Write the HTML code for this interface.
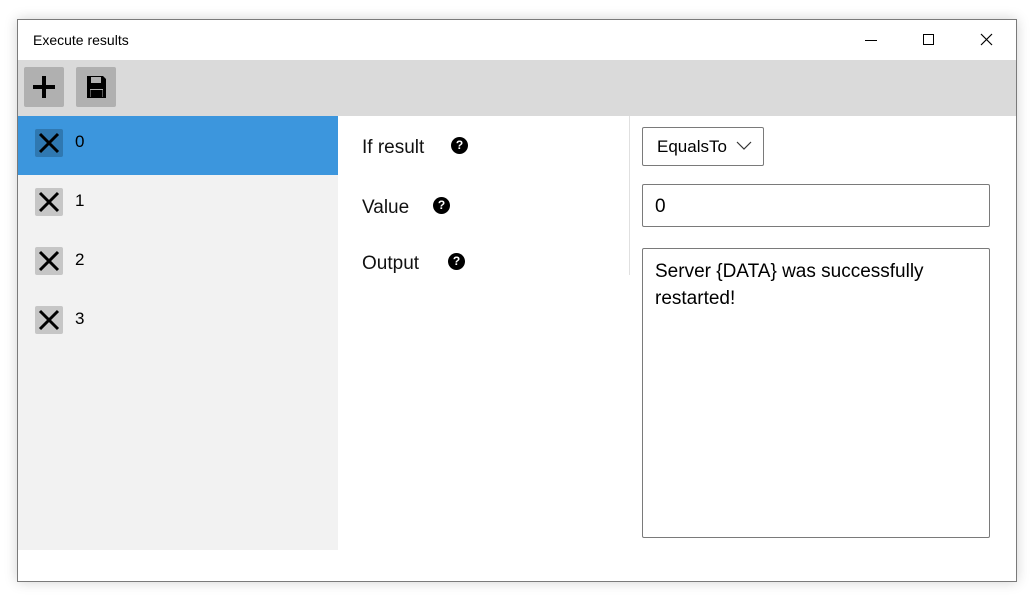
<!DOCTYPE html>
<html><head><style>
body{margin:0;width:1033px;height:616px;background:#fff;position:relative;overflow:hidden;font-family:"Segoe UI","Liberation Sans",sans-serif;color:#000}
.a{position:absolute}
.win{left:17px;top:19px;width:998px;height:561px;border:1px solid #7a7a7a;box-shadow:0 0 12px rgba(0,0,0,.18);background:#fff}
.xb{width:28px;height:28px;background:#c6c6c6;border-radius:2px}
.row{left:18px;width:320px;height:59px}
.row span{position:absolute;left:57px;top:16px;font-size:17px}
.lbl{font-size:19px;color:#111}
.q{width:17px;height:17px;border-radius:50%;background:#000;color:#fff;font-size:12px;font-weight:bold;text-align:center;line-height:17px}
.box{border:1px solid #7a7a7a;border-radius:2px;background:#fff;font-size:19px;box-sizing:border-box}
</style></head><body>
<div class="a win"></div>
<div class="a" style="left:33px;top:32px;font-size:14px">Execute results</div>
<svg class="a" style="left:860px;top:30px" width="140" height="20">
<line x1="5" y1="10.5" x2="17" y2="10.5" stroke="#000"/>
<rect x="63.5" y="4.5" width="10" height="10" fill="none" stroke="#000"/>
<path d="M121 4L132 15M132 4L121 15" stroke="#000" stroke-width="1.2"/>
</svg>
<div class="a" style="left:18px;top:60px;width:998px;height:56px;background:#dadada"></div>
<div class="a" style="left:24px;top:67px;width:40px;height:40px;background:#b0b0b0;border-radius:2px"></div>
<svg class="a" style="left:24px;top:67px" width="40" height="40"><path d="M20 9V31M9 20H31" stroke="#000" stroke-width="4"/></svg>
<div class="a" style="left:76px;top:67px;width:40px;height:40px;background:#b0b0b0;border-radius:2px"></div>
<svg class="a" style="left:76px;top:67px" width="40" height="40"><path d="M11 9H27L30 12V31H11Z" fill="#000"/><rect x="15" y="10" width="10" height="6" fill="#b0b0b0"/><rect x="14" y="22" width="13" height="8" fill="#b0b0b0"/><rect x="14.5" y="23" width="12" height="7" fill="#000"/></svg>
<div class="a" style="left:18px;top:116px;width:320px;height:434px;background:#f2f2f2"></div>
<div class="a row" style="top:116px;background:#3c96dd"><span>0</span></div>
<div class="a row" style="top:175px"><span>1</span></div>
<div class="a row" style="top:234px"><span>2</span></div>
<div class="a row" style="top:293px"><span>3</span></div>
<div class="a xb" style="left:35px;top:129px;background:#2f78b1"></div>
<div class="a xb" style="left:35px;top:188px"></div>
<div class="a xb" style="left:35px;top:247px"></div>
<div class="a xb" style="left:35px;top:306px"></div>
<svg class="a" style="left:35px;top:129px" width="28" height="220">
<g stroke="#000" stroke-width="3"><path d="M5 5L23 23M23 5L5 23"/><path d="M5 64L23 82M23 64L5 82"/><path d="M5 123L23 141M23 123L5 141"/><path d="M5 182L23 200M23 182L5 200"/></g></svg>
<div class="a lbl" style="left:362px;top:137px">If result</div>
<div class="a q" style="left:451px;top:137px">?</div>
<div class="a lbl" style="left:362px;top:197px">Value</div>
<div class="a q" style="left:433px;top:197px">?</div>
<div class="a lbl" style="left:362px;top:253px">Output</div>
<div class="a q" style="left:448px;top:253px">?</div>
<div class="a" style="left:629px;top:116px;width:1px;height:159px;background:#e0e0e0"></div>
<div class="a box" style="left:642px;top:127px;width:122px;height:39px;font-size:17px;padding:9px 0 0 14px">EqualsTo</div>
<svg class="a" style="left:736px;top:140px" width="16" height="10"><path d="M1 2L8 9L15 2" fill="none" stroke="#333" stroke-width="1.2"/></svg>
<div class="a box" style="left:642px;top:184px;width:348px;height:43px;padding:11px 0 0 12px">0</div>
<div class="a box" style="left:642px;top:248px;width:348px;height:290px;padding:9px 12px;line-height:27px">Server {DATA} was successfully restarted!</div>
</body></html>
